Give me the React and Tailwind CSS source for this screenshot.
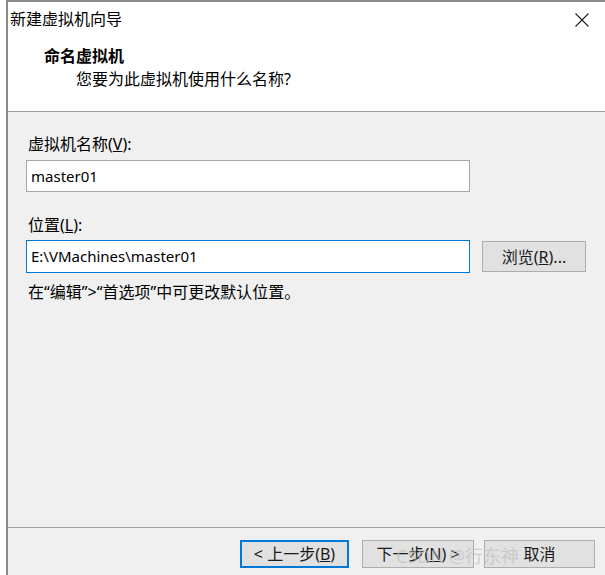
import React from "react";

const font = { fontFamily: '"Noto Sans", "Noto Sans CJK SC", sans-serif' };

function Btn({ children, active, className = "" }) {
  return (
    <button
      className={
        "h-[28px] bg-[#e1e1e1] text-[16px] leading-[20px] text-[#1a1a1a] flex items-center justify-center " +
        (active ? "border-2 border-[#0078d7] " : "border border-[#adadad] ") +
        className
      }
    >
      {children}
    </button>
  );
}

export default function App() {
  return (
    <div className="w-[605px] h-[575px] bg-white pl-[6px] overflow-hidden relative" style={font}>
      <div className="h-full border-l-2 border-[#8c8c8c] flex flex-col">
        {/* header */}
        <div className="bg-white border-t-2 border-[#8c8c8c]">
          <div className="h-[34px] flex items-center justify-between pl-[2px] pr-[15px]">
            <span className="text-[16px] text-black">新建虚拟机向导</span>
            <svg width="16" height="16" viewBox="0 0 16 16" className="mt-[1px]">
              <path d="M1.5 1.5 L14.5 14.5 M14.5 1.5 L1.5 14.5" stroke="#222" strokeWidth="1.1" />
            </svg>
          </div>
          <div className="h-[76px] border-b border-[#a0a0a0] pl-[36px] pt-[9px]">
            <div className="text-[16px] font-bold text-black leading-[22px]">命名虚拟机</div>
            <div className="text-[16px] text-black leading-[22px] pl-[32px] mt-[1px]">
              您要为此虚拟机使用什么名称?
            </div>
          </div>
        </div>

        {/* body */}
        <div className="flex-1 bg-[#f0f0f0] pl-[18px] pt-[22px]">
          <div className="text-[16px] leading-[20px] text-black pl-[2px]">
            虚拟机名称(<span className="underline">V</span>):
          </div>
          <div className="mt-[6px] w-[444px] h-[32px] bg-white border border-[#a8a8a8] flex items-center pl-[4px] text-[15px] text-black">
            master01
          </div>
          <div className="mt-[23px] text-[16px] leading-[20px] text-black pl-[2px]">
            位置(<span className="underline">L</span>):
          </div>
          <div className="mt-[5px] flex items-center gap-3">
            <div className="w-[444px] h-[33px] bg-white border border-[#0078d7] flex items-center pl-[4px] text-[15px] text-black">
              E:\VMachines\master01
            </div>
            <Btn className="w-[104px] h-[31px]">
              浏览(<span className="underline">R</span>)...
            </Btn>
          </div>
          <div className="mt-[9px] text-[16px] leading-[20px] text-black pl-[2px]">
            在“编辑”&gt;“首选项”中可更改默认位置。
          </div>
        </div>

        {/* footer */}
        <div className="h-[48px] bg-[#f0f0f0] border-t border-[#a0a0a0] flex justify-end items-start pt-[12px] pr-[10px]">
          <Btn active className="w-[109px]">
            &lt; 上一步(<span className="underline">B</span>)
          </Btn>
          <Btn className="w-[112px] ml-[13px]">
            下一步(<span className="underline">N</span>) &gt;
          </Btn>
          <Btn className="w-[111px] ml-[10px]">取消</Btn>
        </div>
      </div>

      {/* watermark */}
      <div className="absolute left-[396px] top-[545px] text-[18px] leading-[22px] text-[#bdbdbd] opacity-60 pointer-events-none">
        CSDN @行东神
      </div>
    </div>
  );
}
